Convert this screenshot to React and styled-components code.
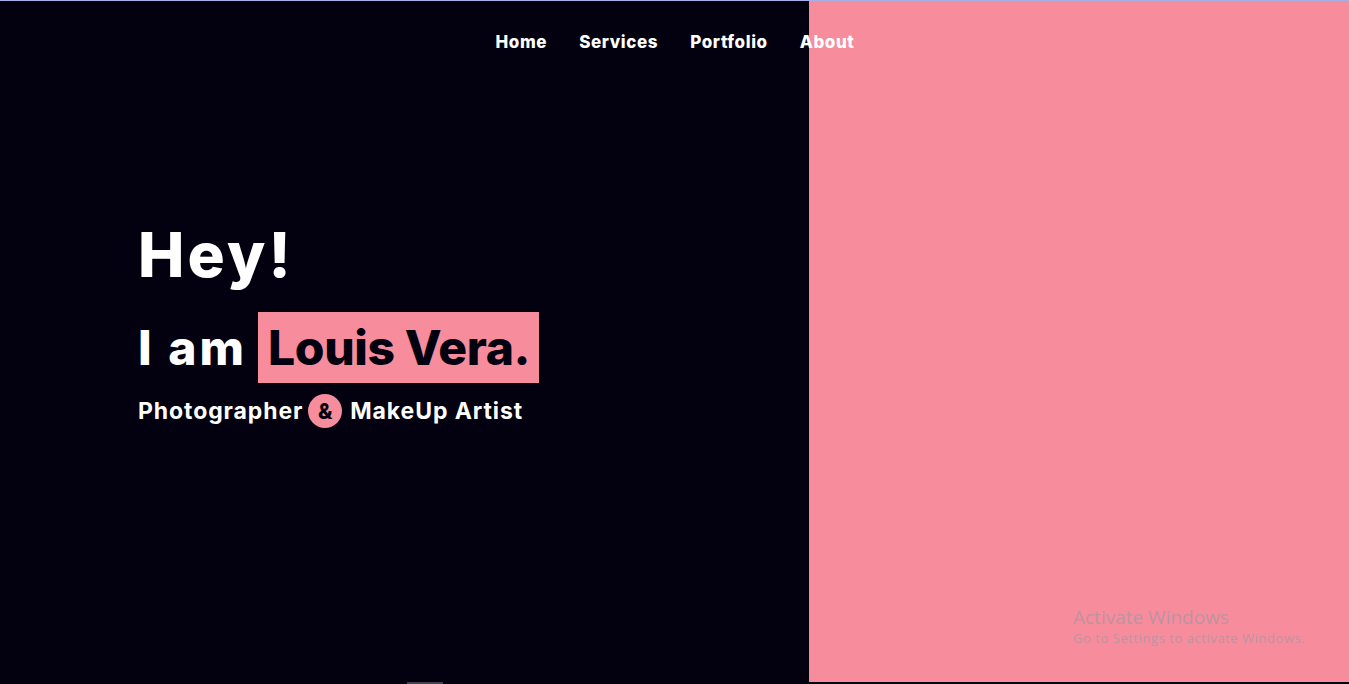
import React from "react";
import styled, { createGlobalStyle } from "styled-components";

const Global = createGlobalStyle`
  html, body { margin: 0; padding: 0; }
  body {
    background: #03000f;
    font-family: "Inter", "Lato", sans-serif;
    overflow: hidden;
  }
`;

const Page = styled.div`
  width: 1349px;
  height: 684px;
  display: flex;
  flex-direction: column;
  border-top: 1px solid #a7aee6;
  box-sizing: border-box;
`;

const Hero = styled.section`
  position: relative;
  height: 681px;
  display: grid;
  grid-template-columns: 809px 1fr;
`;

const Left = styled.div`
  background: #03000f;
  padding: 214px 0 0 138px;
  display: flex;
  flex-direction: column;
  align-items: flex-start;
`;

const Right = styled.div`
  background: #f78c9d;
  position: relative;
`;

const Nav = styled.nav`
  position: absolute;
  top: 31px;
  left: 0;
  right: 0;
  display: flex;
  justify-content: center;
  gap: 32px;
  padding-left: 1px;
`;

const NavLink = styled.a`
  color: #ffffff;
  font-family: "Inter", sans-serif;
  font-weight: 800;
  font-size: 17px;
  text-decoration: none;
  letter-spacing: 0.6px;
`;

const Hey = styled.h1`
  margin: 0;
  color: #fff;
  font-weight: 800;
  font-size: 62px;
  line-height: 80px;
  letter-spacing: 3.2px;
`;

const NameRow = styled.div`
  display: flex;
  align-items: center;
  margin-top: 17px;
  gap: 11px;
`;

const IAm = styled.span`
  color: #fff;
  font-weight: 800;
  font-size: 48px;
  letter-spacing: 3px;
`;

const Highlight = styled.span`
  background: #f78c9d;
  color: #03000f;
  font-weight: 800;
  font-size: 48px;
  height: 71px;
  display: flex;
  align-items: center;
  padding: 0 9px 0 10px;
  letter-spacing: -0.35px;
`;

const Subtitle = styled.div`
  display: flex;
  align-items: center;
  gap: 6px;
  margin-top: 11px;
  color: #fff;
  font-weight: 700;
  font-size: 23px;
  letter-spacing: 0.9px;
`;

const Amp = styled.span`
  width: 34px;
  height: 34px;
  border-radius: 50%;
  background: #f78c9d;
  color: #03000f;
  display: flex;
  align-items: center;
  justify-content: center;
  font-weight: 800;
  font-size: 21px;
  letter-spacing: 0;
  margin-left: -1px;
  margin-right: 2px;
`;

const Watermark = styled.div`
  position: absolute;
  left: 264px;
  top: 604px;
  color: rgba(170, 150, 160, 0.75);
  font-family: "Open Sans", "Noto Sans", sans-serif;
`;

const WmTitle = styled.div`
  font-size: 19px;
  line-height: 24px;
`;

const WmSub = styled.div`
  font-size: 13px;
  line-height: 18px;
  letter-spacing: 0.55px;
`;

const BottomStrip = styled.div`
  height: 2px;
  background: #03000f;
  display: flex;
`;

const Thumb = styled.div`
  margin-left: 407px;
  width: 36px;
  background: #44434d;
`;

export default function App() {
  return (
    <>
      <Global />
      <Page>
        <Hero>
          <Left>
            <Hey>Hey!</Hey>
            <NameRow>
              <IAm>I am</IAm>
              <Highlight>Louis Vera.</Highlight>
            </NameRow>
            <Subtitle>
              <span>Photographer</span>
              <Amp>&amp;</Amp>
              <span>MakeUp Artist</span>
            </Subtitle>
          </Left>
          <Right>
            <Watermark>
              <WmTitle>Activate Windows</WmTitle>
              <WmSub>Go to Settings to activate Windows.</WmSub>
            </Watermark>
          </Right>
          <Nav>
            <NavLink href="#">Home</NavLink>
            <NavLink href="#">Services</NavLink>
            <NavLink href="#">Portfolio</NavLink>
            <NavLink href="#">About</NavLink>
          </Nav>
        </Hero>
        <BottomStrip>
          <Thumb />
        </BottomStrip>
      </Page>
    </>
  );
}
